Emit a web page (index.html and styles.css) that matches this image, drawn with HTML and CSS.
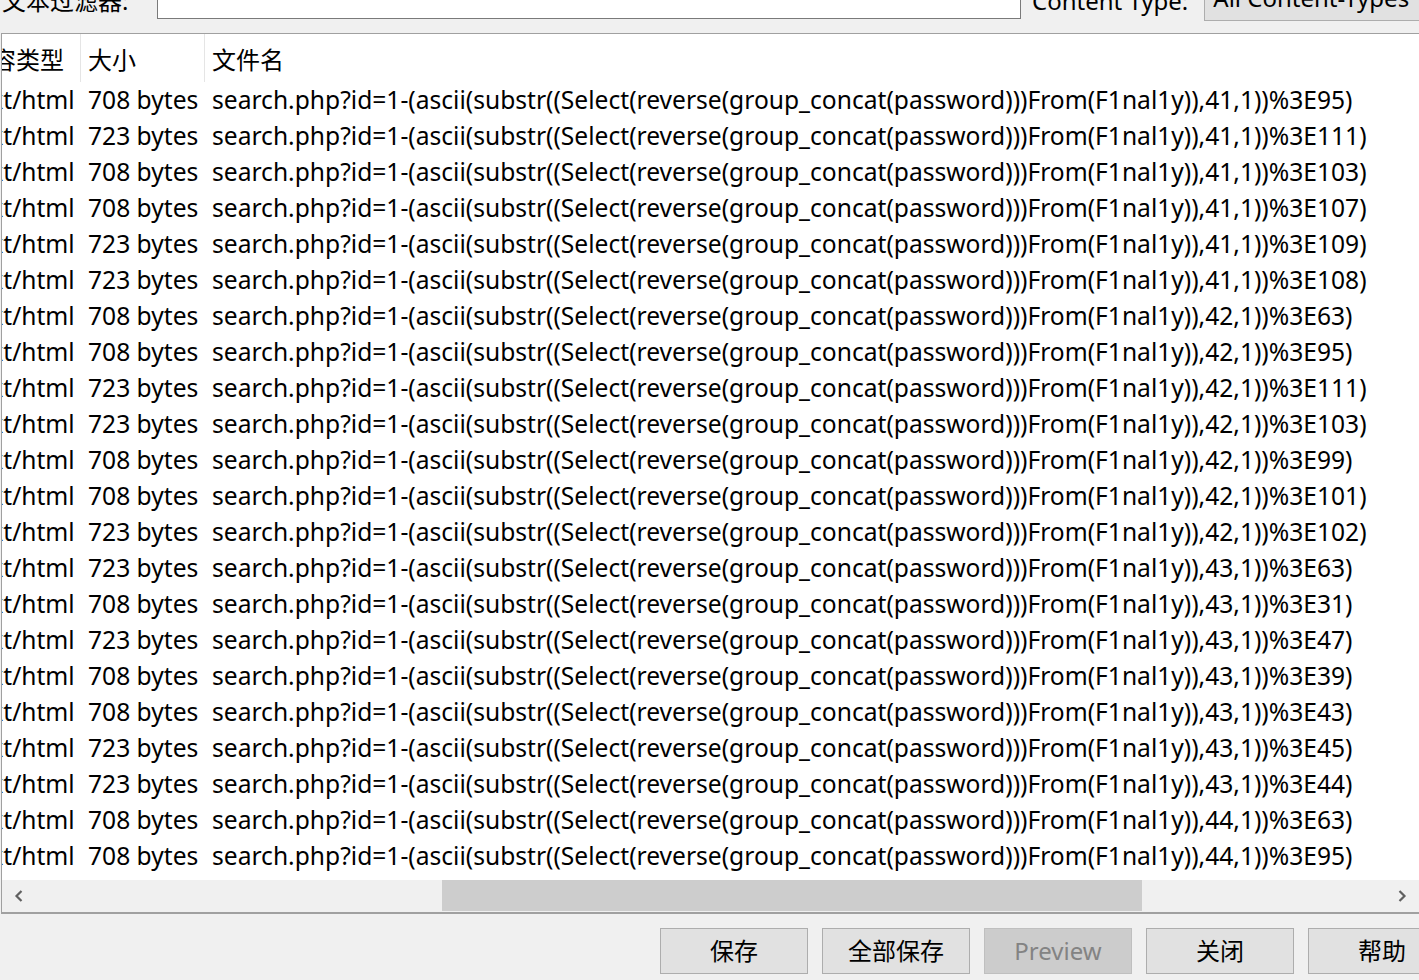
FILE: index.html
```html
<!DOCTYPE html>
<html lang="zh">
<head>
<meta charset="utf-8">
<title>导出 HTTP 对象列表</title>
<link rel="stylesheet" href="styles.css">
</head>
<body>
<div class="dialog">
  <div class="filterbar">
    <span class="label">文本过滤器:</span>
    <div class="textinput"></div>
    <span class="label ct-label">Content Type:</span>
    <div class="combo">All Content-Types</div>
  </div>

  <div class="frame">
    <div class="viewport">
      <div class="table">
        <div class="row head">
          <div class="cell c1">内容类型</div>
          <div class="cell c2">大小</div>
          <div class="cell c3">文件名</div>
        </div>
        <div class="rows" id="rows"></div>
      </div>
    </div>
    <div class="hscroll">
      <span class="arrow left"><svg width="10" height="14" viewBox="0 0 10 14"><path d="M7.5 2 L2.5 7 L7.5 12" fill="none" stroke="#606060" stroke-width="2.2"/></svg></span>
      <div class="track"><div class="thumb"></div></div>
      <span class="arrow right"><svg width="10" height="14" viewBox="0 0 10 14"><path d="M2.5 2 L7.5 7 L2.5 12" fill="none" stroke="#606060" stroke-width="2.2"/></svg></span>
    </div>
  </div>

  <div class="buttons">
    <button class="btn">保存</button>
    <button class="btn">全部保存</button>
    <button class="btn disabled">Preview</button>
    <button class="btn">关闭</button>
    <button class="btn">帮助</button>
  </div>
</div>
<script src="app.js"></script>
</body>
</html>
```

FILE: app.js
```js
var data = [
  ["708","41","95"],["723","41","111"],["708","41","103"],["708","41","107"],
  ["723","41","109"],["723","41","108"],["708","42","63"],["708","42","95"],
  ["723","42","111"],["723","42","103"],["708","42","99"],["708","42","101"],
  ["723","42","102"],["723","43","63"],["708","43","31"],["723","43","47"],
  ["708","43","39"],["708","43","43"],["723","43","45"],["723","43","44"],
  ["708","44","63"],["708","44","95"]
];
var rows = document.getElementById("rows");
var html = "";
for (var i = 0; i < data.length; i++) {
  var d = data[i];
  html += '<div class="row"><div class="cell c1">text/html</div><div class="cell c2">' + d[0] +
    ' bytes</div><div class="cell c3">search.php?id=1-(ascii(substr((Select(reverse(group_concat(password)))From(F1nal1y)),' +
    d[1] + ',1))%3E' + d[2] + ')</div></div>';
}
rows.innerHTML = html;
```

FILE: styles.css
```css
html, body {
  margin: 0;
  padding: 0;
}
body {
  width: 1419px;
  height: 980px;
  overflow: hidden;
  background: #f0f0f0;
  font-family: "Noto Sans", "Noto Sans CJK SC", sans-serif;
  font-size: 24px;
  color: #000;
}
.dialog {
  display: flex;
  flex-direction: column;
  height: 980px;
}
.filterbar {
  display: flex;
  align-items: flex-start;
  height: 47px;
  margin-top: -14px;
  flex: none;
}
.filterbar .label {
  line-height: 28px;
  margin-top: 1px;
  padding-left: 2px;
  white-space: nowrap;
  width: 155px;
  flex: none;
}
.textinput {
  width: 862px;
  height: 31px;
  background: #fff;
  border: 1px solid #7a7a7a;
  flex: none;
}
.filterbar .ct-label {
  width: auto;
  padding-left: 11px;
  margin-right: 16px;
}
.combo {
  flex: 1;
  height: 33px;
  background: #e1e1e1;
  border: 1px solid #adadad;
  border-right: none;
  padding-left: 8px;
  line-height: 22px;
  white-space: nowrap;
  overflow: hidden;
}
.frame {
  margin-left: 1px;
  border-top: 1px solid #a0a0a0;
  border-left: 1px solid #a0a0a0;
  border-bottom: 2px solid #a0a0a0;
  background: #fff;
  flex: none;
  display: flex;
  flex-direction: column;
}
.viewport {
  height: 846px;
  overflow: hidden;
  background: #fff;
}
.table {
  margin-left: -42px;
  white-space: nowrap;
}
.row {
  display: flex;
  height: 36px;
  line-height: 36px;
  font-size: 24.6px;
}
.row.head {
  height: 48px;
  font-size: 24px;
}
.cell {
  padding-left: 7px;
  flex: none;
  box-sizing: border-box;
  overflow: hidden;
}
.c1 { width: 121px; padding-left: 8px; }
.c2 { width: 124px; }
.c3 { width: 1400px; }
.head .cell {
  border-right: 1px solid #e5e5e5;
  padding-top: 4px;
  line-height: 44px;
}
.hscroll {
  height: 32px;
  background: #f0f0f0;
  display: flex;
  align-items: stretch;
}
.arrow {
  width: 34px;
  display: flex;
  align-items: center;
  justify-content: center;
  flex: none;
}
.track {
  flex: 1;
}
.thumb {
  margin-left: 406px;
  width: 700px;
  height: 31px;
  background: #cdcdcd;
}
.buttons {
  display: flex;
  gap: 14px;
  padding-left: 660px;
  padding-top: 14px;
  flex: none;
}
.btn {
  flex: none;
  width: 148px;
  height: 46px;
  background: #e1e1e1;
  border: 1px solid #adadad;
  font-family: "Noto Sans", "Noto Sans CJK SC", sans-serif;
  font-size: 24px;
  color: #000;
  padding: 0;
  line-height: 44px;
}
.btn.disabled {
  background: #cccccc;
  border-color: #bfbfbf;
  color: #838383;
}
```
